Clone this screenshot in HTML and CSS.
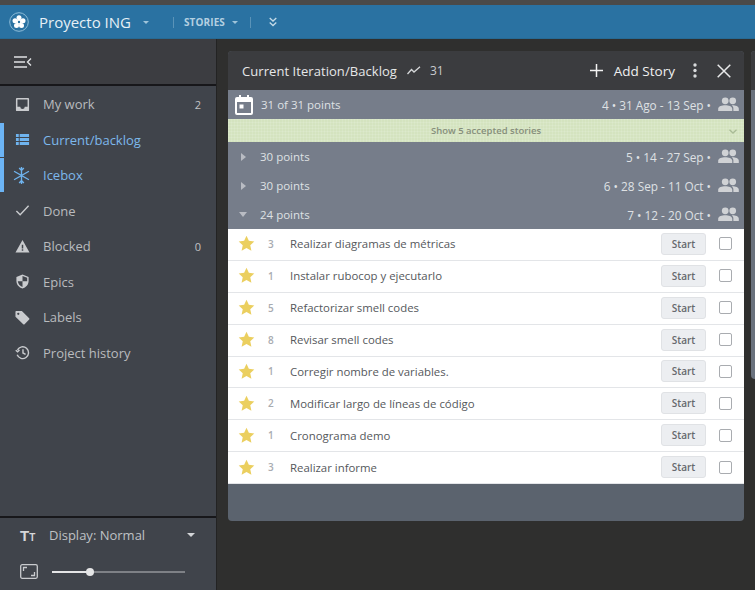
FILE: index.html
```html
<!DOCTYPE html>
<html lang="en">
<head>
    <meta charset="UTF-8">
    <title>Proyecto ING</title>
    <link rel="stylesheet" href="styles.css">
</head>
<body>
<svg class="defs" width="0" height="0">
    <symbol id="people" viewBox="0 0 22 16">
        <circle cx="7.5" cy="4" r="3.6"/><circle cx="15.5" cy="4" r="3.6"/>
        <path d="M0 15v-2.5C0 10 4 8.800 7.500 8.800S15 10 15 12.500V15zM16.200 15v-2.500c0-1.500-.7-2.700-1.800-3.600 3.300-.2 7.600.9 7.600 3.600V15z"/>
    </symbol>
    <symbol id="star" viewBox="0 0 24 24">
        <path d="M12 1l3.300 7.200 7.700.9-5.700 5.300 1.600 7.800L12 18.300l-6.900 3.900 1.600-7.800L1 9.100l7.700-.9z"/>
    </symbol>
</svg>
<div class="strip"></div>
<header class="topbar">
    <svg class="logo" width="20" height="20" viewBox="0 0 20 20">
        <circle cx="10" cy="10" r="9.3" fill="none" stroke="#8fbdd8" stroke-width="1"/>
        <circle cx="10" cy="5.8" r="2.5" fill="#fff"/>
        <circle cx="14" cy="8.7" r="2.5" fill="#fff"/>
        <circle cx="12.5" cy="13.4" r="2.5" fill="#fff"/>
        <circle cx="7.5" cy="13.4" r="2.5" fill="#fff"/>
        <circle cx="6" cy="8.7" r="2.5" fill="#fff"/>
        <circle cx="10" cy="10" r="2.6" fill="#fff"/>
        <circle cx="10" cy="10" r="1.2" fill="#2a72a0"/>
    </svg>
    <span class="project">Proyecto ING</span>
    <span class="caret small"></span>
    <span class="sep"></span>
    <span class="stories">STORIES</span>
    <span class="caret small"></span>
    <span class="sep"></span>
    <svg class="chevrons" width="8" height="10" viewBox="0 0 8 10" fill="none" stroke="#c5dbe8" stroke-width="1.3"><path d="M.7 1L4 4l3.300-3M.7 5.500l3.300 3 3.300-3"/></svg>
</header>
<div class="app">
    <aside class="sidebar">
        <div class="side-top">
            <svg width="18" height="12" viewBox="0 0 18 12" fill="none" stroke="#dfe1e3" stroke-width="1.4"><path d="M0 1h13M0 6h11M0 11h13M17 2.500L13.500 6l3.500 3.500"/></svg>
        </div>
        <nav class="nav">
            <a class="nav-item">
                <svg class="nav-icon" viewBox="0 0 16 16"><path fill-rule="evenodd" d="M2 1h12a1 1 0 0 1 1 1v12a1 1 0 0 1-1 1H2a1 1 0 0 1-1-1V2a1 1 0 0 1 1-1zm.6 1.600v7.900h3a2.400 2.400 0 0 0 4.800 0h3V2.600z"/></svg>
                <span class="nav-label">My work</span><span class="count">2</span>
            </a>
            <a class="nav-item active">
                <svg class="nav-icon" viewBox="0 0 16 16"><path d="M1 2h3v3.300H1zM5 2h10v3.300H5zM1 6.300h3v3.300H1zM5 6.300h10v3.300H5zM1 10.600h3v3.300H1zM5 10.600h10v3.300H5z"/></svg>
                <span class="nav-label">Current/backlog</span>
            </a>
            <a class="nav-item active">
                <svg class="nav-icon line ice" viewBox="0 0 16 16"><path d="M8 0v16M1 4l14 8M15 4L1 12M5.800 1L8 3.200 10.200 1M5.800 15L8 12.800l2.200 2.200"/></svg>
                <span class="nav-label">Icebox</span>
            </a>
            <a class="nav-item">
                <svg class="nav-icon line" viewBox="0 0 16 16"><path d="M1.500 8.500l4 4L14.500 3"/></svg>
                <span class="nav-label">Done</span>
            </a>
            <a class="nav-item">
                <svg class="nav-icon" viewBox="0 0 16 16"><path fill-rule="evenodd" d="M8 1l7.500 13.500H.5zM7.200 6v4h1.600V6zm0 5v1.600h1.600V11z"/></svg>
                <span class="nav-label">Blocked</span><span class="count">0</span>
            </a>
            <a class="nav-item">
                <svg class="nav-icon" viewBox="0 0 16 16"><path fill-rule="evenodd" d="M8 .5l6.500 2.600v4.400c0 3.700-2.700 6.900-6.500 8-3.800-1.100-6.500-4.300-6.500-8V3.100zM8 2.200v5.600H3c.2 2.700 2.200 5 5 6V7.800h5V4z"/></svg>
                <span class="nav-label">Epics</span>
            </a>
            <a class="nav-item">
                <svg class="nav-icon" viewBox="0 0 16 16"><path fill-rule="evenodd" d="M1.300 1h6l7.800 7.800a1 1 0 0 1 0 1.400l-4.900 4.900a1 1 0 0 1-1.400 0L.5 7.300V1.800A.8.8 0 0 1 1.300 1zm2.200 1.800a1.200 1.200 0 1 0 0 2.400 1.200 1.200 0 0 0 0-2.400z"/></svg>
                <span class="nav-label">Labels</span>
            </a>
            <a class="nav-item">
                <svg class="nav-icon line" viewBox="0 0 16 16"><path d="M2.600 5.200a6.300 6.300 0 1 1-.3 5.300M.8 5.500l2 1.800 2-2M8.500 4.500v4l2.800 1.600"/></svg>
                <span class="nav-label">Project history</span>
            </a>
        </nav>
        <div class="side-bottom">
            <div class="display-row">
                <span class="tt">T<small>T</small></span>
                <span class="display-label">Display: Normal</span>
                <span class="caret"></span>
            </div>
            <div class="zoom-row">
                <svg width="18" height="15" viewBox="0 0 18 15" fill="none" stroke="#c9cbce" stroke-width="1.3"><rect x=".7" y=".7" width="16.6" height="13.6" rx="1.5"/><path d="M3.500 7V3.500H7M14.500 8v3.500H11"/></svg>
                <div class="slider"><div class="slider-fill"></div><div class="slider-knob"></div></div>
            </div>
        </div>
    </aside>
    <main class="main">
        <section class="panel">
            <div class="panel-head">
                <span class="panel-title">Current Iteration/Backlog</span>
                <svg class="trend" width="14" height="9" viewBox="0 0 14 9" fill="none" stroke="#d5d7d9" stroke-width="1.3"><path d="M.5 8l4-4.500 2.500 2.500L13 .8"/></svg>
                <span class="velocity">31</span>
                <span class="add-story"><svg width="13" height="13" viewBox="0 0 13 13" stroke="#f2f2f2" stroke-width="1.5"><path d="M6.500 0v13M0 6.500h13"/></svg>Add Story</span>
                <svg class="dots" width="4" height="15" viewBox="0 0 4 15" fill="#d8dadc"><circle cx="2" cy="2" r="1.7"/><circle cx="2" cy="7.5" r="1.7"/><circle cx="2" cy="13" r="1.7"/></svg>
                <svg class="close" width="14" height="14" viewBox="0 0 14 14" stroke="#e8e9ea" stroke-width="1.5"><path d="M.7.7l12.600 12.600M13.300.7L.7 13.300"/></svg>
            </div>
            <div class="iter iter-current">
                <svg class="cal" width="18" height="20" viewBox="0 0 18 20"><path fill="#fff" fill-rule="evenodd" d="M4 0h2v2h6V0h2v2h2a2 2 0 0 1 2 2v14a2 2 0 0 1-2 2H2a2 2 0 0 1-2-2V4a2 2 0 0 1 2-2h2zM2 7v11h14V7zm2.500 2.500h4v4h-4z"/></svg>
                <span class="iter-points">31 of 31 points</span>
                <span class="iter-dates">4 • 31 Ago - 13 Sep •</span>
                <svg class="people"><use href="#people"/></svg>
            </div>
            <div class="accepted">
                <span>Show 5 accepted stories</span>
                <svg width="8" height="5" viewBox="0 0 8 5" fill="none" stroke="#a9bb96" stroke-width="1.3"><path d="M.5.700L4 4 7.500.700"/></svg>
            </div>
            <div class="iter">
                <span class="tri"></span>
                <span class="iter-points">30 points</span>
                <span class="iter-dates">5 • 14 - 27 Sep •</span>
                <svg class="people"><use href="#people"/></svg>
            </div>
            <div class="iter">
                <span class="tri"></span>
                <span class="iter-points">30 points</span>
                <span class="iter-dates">6 • 28 Sep - 11 Oct •</span>
                <svg class="people"><use href="#people"/></svg>
            </div>
            <div class="iter">
                <span class="tri open"></span>
                <span class="iter-points">24 points</span>
                <span class="iter-dates">7 • 12 - 20 Oct •</span>
                <svg class="people"><use href="#people"/></svg>
            </div>
            <ul class="stories-list">
                <li class="story"><svg class="star"><use href="#star"/></svg><span class="est">3</span><span class="story-name">Realizar diagramas de métricas</span><button class="start">Start</button><span class="check"></span></li>
                <li class="story"><svg class="star"><use href="#star"/></svg><span class="est">1</span><span class="story-name">Instalar rubocop y ejecutarlo</span><button class="start">Start</button><span class="check"></span></li>
                <li class="story"><svg class="star"><use href="#star"/></svg><span class="est">5</span><span class="story-name">Refactorizar smell codes</span><button class="start">Start</button><span class="check"></span></li>
                <li class="story"><svg class="star"><use href="#star"/></svg><span class="est">8</span><span class="story-name">Revisar smell codes</span><button class="start">Start</button><span class="check"></span></li>
                <li class="story"><svg class="star"><use href="#star"/></svg><span class="est">1</span><span class="story-name">Corregir nombre de variables.</span><button class="start">Start</button><span class="check"></span></li>
                <li class="story"><svg class="star"><use href="#star"/></svg><span class="est">2</span><span class="story-name">Modificar largo de líneas de código</span><button class="start">Start</button><span class="check"></span></li>
                <li class="story"><svg class="star"><use href="#star"/></svg><span class="est">1</span><span class="story-name">Cronograma demo</span><button class="start">Start</button><span class="check"></span></li>
                <li class="story"><svg class="star"><use href="#star"/></svg><span class="est">3</span><span class="story-name">Realizar informe</span><button class="start">Start</button><span class="check"></span></li>
            </ul>
        </section>
        <section class="panel-next">
            <div class="next-head"></div>
        </section>
    </main>
</div>
</body>
</html>
```

FILE: styles.css
```css
* {
    box-sizing: border-box;
}

html, body {
    height: 100%;
}

body {
    margin: 0;
    display: flex;
    flex-direction: column;
    overflow: hidden;
    background: #2f2f2e;
    font-family: "Open Sans", sans-serif;
    color: #c9cbce;
}

.defs {
    position: absolute;
}

.strip {
    height: 5px;
    background: #4b4a49;
}

.topbar {
    height: 34px;
    flex: none;
    display: flex;
    align-items: center;
    padding-left: 9px;
    background: #2a72a2;
    box-shadow: inset 0 -1px 0 #276a94;
}

.project {
    margin-left: 10px;
    font-size: 15px;
    color: #e6f0f6;
}

.caret {
    width: 0;
    height: 0;
    border-left: 4px solid transparent;
    border-right: 4px solid transparent;
    border-top: 4px solid #d3d5d8;
}

.caret.small {
    margin-left: 12px;
    border-left-width: 3px;
    border-right-width: 3px;
    border-top: 3px solid #9fc4da;
}

.sep {
    width: 1px;
    height: 11px;
    margin: 0 10px 0 24px;
    background: #5a93b8;
}

.stories {
    font-size: 10px;
    font-weight: 700;
    letter-spacing: .1px;
    color: #b4d0e1;
}

.stories + .caret.small {
    margin-left: 7px;
}

.stories + .caret + .sep {
    margin: 0 18px 0 12px;
}

.app {
    flex: 1;
    min-height: 0;
    display: flex;
}

.sidebar {
    width: 217px;
    flex: none;
    display: flex;
    flex-direction: column;
    background: #40444b;
    border-right: 1px solid #232323;
}

.side-top {
    height: 47px;
    flex: none;
    display: flex;
    align-items: center;
    padding-left: 14px;
    background: #3c3d41;
    border-bottom: 2px solid #17171a;
}

.nav {
    flex: 1;
    padding-top: .5px;
}

.nav-item {
    height: 35.5px;
    display: flex;
    align-items: center;
    padding: 0 15px;
    font-size: 13px;
    color: #b9bbbe;
}

.nav-icon {
    width: 15px;
    height: 15px;
    flex: none;
    fill: #c9cbce;
}

.nav-icon.line {
    fill: none;
    stroke: #c9cbce;
    stroke-width: 1.5;
}

.nav-label {
    flex: 1;
    margin-left: 13px;
}

.count {
    font-size: 11px;
    color: #c0c2c4;
}

.active {
    background: linear-gradient(#6cb4f5, #6cb4f5) no-repeat left center / 4px 34px;
    color: #7db8ec;
}

.active .nav-icon {
    fill: #6fb4ef;
}

.active .nav-icon.line {
    fill: none;
    stroke: #6fb4ef;
}

.nav-icon.ice {
    width: 17px;
    height: 17px;
    margin-left: -2px;
    stroke-width: 1.3;
}

.side-bottom {
    height: 74px;
    flex: none;
    padding: 7px 21px 0 20px;
    border-top: 2px solid #17171a;
}

.display-row {
    display: flex;
    align-items: center;
    height: 20px;
}

.tt {
    width: 17px;
    font-family: "Liberation Sans", sans-serif;
    font-size: 15px;
    font-weight: 700;
    line-height: 1;
    color: #d5d7d9;
}

.tt small {
    font-size: 10px;
}

.display-label {
    flex: 1;
    margin-left: 12px;
    font-size: 13px;
    color: #bfc1c4;
}

.zoom-row {
    display: flex;
    align-items: center;
    margin-top: 19px;
}

.slider {
    position: relative;
    width: 133px;
    height: 2px;
    margin-left: 14px;
    background: #7e8186;
}

.slider-fill {
    width: 38px;
    height: 2px;
    background: #e4e5e6;
}

.slider-knob {
    position: absolute;
    left: 34px;
    top: -3px;
    width: 8px;
    height: 8px;
    border-radius: 50%;
    background: #e4e5e6;
}

.main {
    flex: 1;
    min-width: 0;
    display: flex;
    gap: 7px;
    padding: 12px 0 0 11px;
    overflow: hidden;
}

.panel {
    width: 516px;
    height: 470px;
    flex: none;
    display: flex;
    flex-direction: column;
    border-radius: 4px;
    overflow: hidden;
    background: #5b636e;
}

.panel-head {
    height: 39px;
    flex: none;
    display: flex;
    align-items: center;
    padding: 0 13px 0 14px;
    background: #3b3c3f;
    color: #e6e7e8;
}

.panel-title {
    font-size: 13px;
    letter-spacing: .06px;
}

.trend {
    margin-left: 10px;
}

.velocity {
    margin-left: 9px;
    font-size: 12px;
    color: #c9cbce;
}

.add-story {
    margin-left: auto;
    display: flex;
    align-items: center;
    gap: 11px;
    font-size: 13.5px;
    color: #f0f0f0;
}

.dots {
    margin-left: 18px;
}

.close {
    margin-left: 20px;
}

.iter {
    height: 29px;
    flex: none;
    display: flex;
    align-items: center;
    padding: 0 5px 0 13px;
    background: #767d8a;
    font-size: 11.5px;
    color: #dfe1e4;
}

.iter-current {
    padding-left: 7px;
}

.iter-current .iter-points {
    margin-left: 8px;
}

.iter-points {
    margin-left: 14px;
}

.iter-dates {
    margin-left: auto;
    font-size: 11.8px;
}

.people {
    width: 21px;
    height: 15px;
    margin-left: 7px;
    fill: #d0d2d5;
}

.tri {
    width: 0;
    height: 0;
    border-top: 4px solid transparent;
    border-bottom: 4px solid transparent;
    border-left: 5px solid #b9bcc3;
}

.tri.open {
    margin-left: -2px;
    margin-right: -1px;
    border-left: 4px solid transparent;
    border-right: 4px solid transparent;
    border-top: 5px solid #b9bcc3;
    border-bottom: 0;
}

.accepted {
    height: 23px;
    flex: none;
    display: flex;
    align-items: center;
    justify-content: center;
    position: relative;
    background: #d4e3bf;
    background-image: linear-gradient(rgba(255, 255, 255, .1) 1px, transparent 1px), linear-gradient(90deg, rgba(255, 255, 255, .1) 1px, transparent 1px);
    background-size: 3px 3px;
    font-size: 9.5px;
    font-weight: 600;
    color: #868e7b;
}

.accepted svg {
    position: absolute;
    right: 7px;
    top: 10px;
}

.stories-list {
    margin: 0;
    padding: 0;
    list-style: none;
    background: #fff;
}

.story {
    height: 31.88px;
    display: flex;
    align-items: center;
    padding: 0 12px 1px 11px;
    border-bottom: 1px solid #e3e5e8;
    font-size: 11.4px;
    color: #55585c;
}

.star {
    width: 17px;
    height: 17px;
    margin-left: -1px;
    fill: #ebcf5f;
}

.est {
    width: 8px;
    margin-left: 13px;
    font-size: 10px;
    font-weight: 600;
    color: #a8abb0;
}

.story-name {
    flex: 1;
    margin-left: 14px;
}

.start {
    width: 45px;
    height: 22px;
    padding: 0;
    border: 1px solid #e0e2e5;
    border-radius: 3px;
    background: #eceef1;
    font-family: inherit;
    font-size: 10px;
    font-weight: 600;
    color: #66696d;
}

.check {
    width: 13px;
    height: 13px;
    margin-left: 13px;
    border: 1px solid #a9acb0;
    border-radius: 2px;
    background: #fff;
}

.panel-next {
    width: 200px;
    height: 328px;
    flex: none;
    border-radius: 4px;
    overflow: hidden;
    background: #69717d;
}

.next-head {
    height: 39px;
    background: #3b3c3f;
}
```
